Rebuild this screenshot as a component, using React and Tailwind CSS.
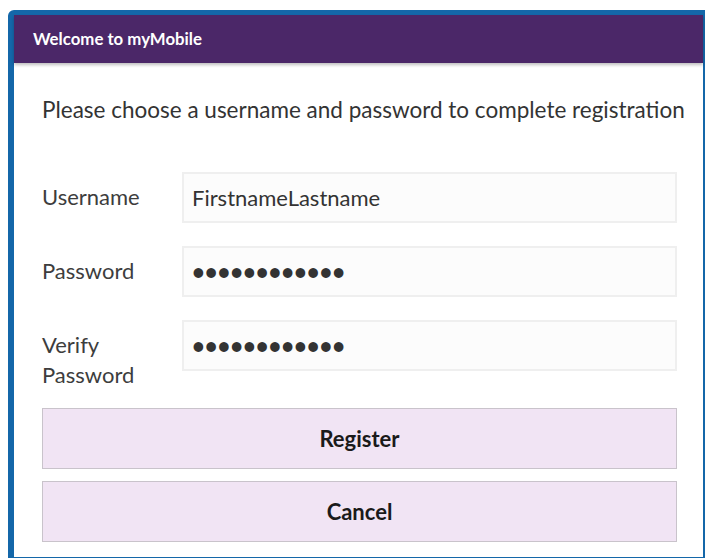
import { useState } from 'react'

// one labelled row of the registration form
function FormRow({ label, children }) {
  return (
    <div className="flex items-start">
      <div className="w-[140px] pt-[10px] text-[22px] leading-[30px] text-[#3d3d3d]">{label}</div>
      {children}
    </div>
  )
}

function TextBox({ value, masked }) {
  return (
    <div className="flex h-[51px] flex-1 items-center border-2 border-[#efefef] bg-[#fcfcfc] px-[8px] text-[22px] text-[#333]">
      {masked ? (
        <span className="text-[22px] font-bold text-[#333]">{'•'.repeat(value.length)}</span>
      ) : (
        value
      )}
    </div>
  )
}

export default function App() {
  const [username] = useState('FirstnameLastname')
  const [password] = useState('secretpass12')

  return (
    <div className="h-[558px] w-[705px] overflow-hidden bg-white pl-[8px] pt-[10px] font-['Lato','Liberation_Sans',sans-serif]">
      <div className="h-[548px] rounded-tl-[6px] border-b border-l-[6px] border-r-2 border-t-[5px] border-[#1467a9] bg-white">
        <div className="flex h-[48px] items-center bg-[#4b2768] px-[19px] text-[16.8px] font-bold text-white shadow-[0_2px_3px_rgba(0,0,0,0.25)]">
          Welcome to myMobile
        </div>

        <div className="pl-[28px] pr-[26px]">
          <p className="mt-[33px] whitespace-nowrap text-[22.5px] leading-[28px] text-[#333]">
            Please choose a username and password to complete registration
          </p>

          <div className="mt-[48px] flex flex-col gap-[23px]">
            <FormRow label="Username">
              <TextBox value={username} />
            </FormRow>
            <FormRow label="Password">
              <TextBox value={password} masked />
            </FormRow>
            <FormRow label={<>Verify<br />Password</>}>
              <TextBox value={password} masked />
            </FormRow>
          </div>

          <div className="mt-[18px] flex flex-col gap-[12px]">
            <button className="h-[61px] w-full border border-[#c9c3cb] bg-[#f1e4f4] text-[22px] font-bold text-[#1a1a1a]">
              Register
            </button>
            <button className="h-[61px] w-full border border-[#c9c3cb] bg-[#f1e4f4] text-[22px] font-bold text-[#1a1a1a]">
              Cancel
            </button>
          </div>
        </div>
      </div>
    </div>
  )
}
